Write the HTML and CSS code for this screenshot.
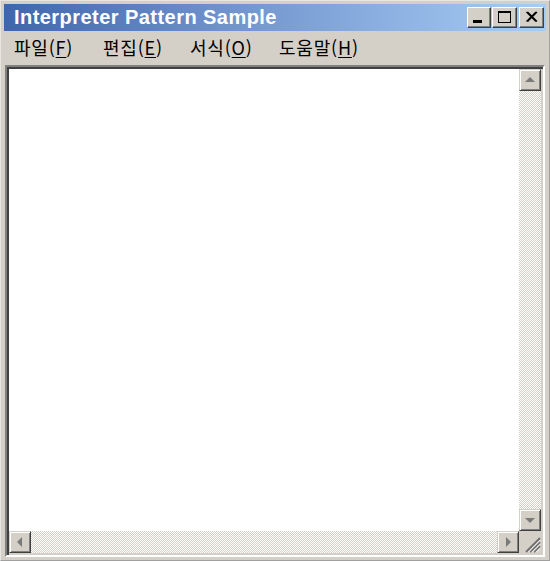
FILE: index.html
```html
<!DOCTYPE html>
<html lang="ko">
<head>
<meta charset="utf-8">
<title>Interpreter Pattern Sample</title>
<link rel="stylesheet" href="styles.css">
</head>
<body>
<div class="window">
  <div class="titlebar">
    <span class="title">Interpreter Pattern Sample</span>
    <div class="caption-buttons">
      <div class="cbtn"><svg width="24" height="21" viewBox="0 0 24 21"><rect x="6" y="13" width="9" height="3" fill="#000"/></svg></div>
      <div class="cbtn max"><svg width="24" height="21" viewBox="0 0 24 21"><rect x="5.5" y="4.5" width="12" height="11" fill="none" stroke="#000"/><rect x="5" y="4" width="13" height="2" fill="#000"/></svg></div>
      <div class="cbtn close"><svg width="24" height="21" viewBox="0 0 24 21"><path d="M6.5 5 L16 14.5 M7.5 5 L17 14.5 M16 5 L6.5 14.5 M17 5 L7.5 14.5" stroke="#000" stroke-width="1.4"/></svg></div>
    </div>
  </div>
  <div class="menubar">
    <span class="menu m1">파일(<u>F</u>)</span>
    <span class="menu m2">편집(<u>E</u>)</span>
    <span class="menu m3">서식(<u>O</u>)</span>
    <span class="menu m4">도움말(<u>H</u>)</span>
  </div>
  <div class="client">
    <div class="edit"></div>
    <div class="vscroll">
      <div class="sbtn"><svg width="20" height="20" viewBox="0 0 20 20"><path d="M5 12 L15 12 L10 7 Z" fill="#7a7a7a"/></svg></div>
      <div class="track"></div>
      <div class="sbtn"><svg width="20" height="20" viewBox="0 0 20 20"><path d="M5 8 L15 8 L10 13 Z" fill="#7a7a7a"/></svg></div>
    </div>
    <div class="hscroll">
      <div class="sbtn"><svg width="20" height="20" viewBox="0 0 20 20"><path d="M12 5 L12 15 L7 10 Z" fill="#7a7a7a"/></svg></div>
      <div class="track"></div>
      <div class="sbtn"><svg width="20" height="20" viewBox="0 0 20 20"><path d="M8 5 L8 15 L13 10 Z" fill="#7a7a7a"/></svg></div>
    </div>
    <div class="grip"><svg width="22" height="22" viewBox="0 0 22 22"><path d="M21 7 L7 21 M21 11 L11 21 M21 15 L15 21" stroke="#707070" stroke-width="1.8"/><path d="M21 9.5 L9.5 21 M21 13.5 L13.5 21 M21 17.5 L17.5 21" stroke="#fff" stroke-width="1"/></svg></div>
  </div>
</div>
</body>
</html>
```
FILE: styles.css
```css
html, body {
  margin: 0;
  padding: 0;
  background: #ffffff;
}
.window {
  width: 550px;
  height: 561px;
  box-sizing: border-box;
  background: #d4d0c8;
  border-top: 1px solid #e8e6e0;
  border-left: 1px solid #e8e6e0;
  border-right: 1px solid #a0a0a0;
  border-bottom: 1px solid #a0a0a0;
  padding: 3px;
  display: flex;
  flex-direction: column;
}
.titlebar {
  height: 27px;
  flex: none;
  background: linear-gradient(to right, #3f65ad 0%, #6f92cc 40%, #a8cdf4 100%);
  display: flex;
  align-items: center;
  padding: 0 2px 0 10px;
}
.title {
  font-family: "Liberation Sans", Arial, sans-serif;
  font-weight: bold;
  font-size: 20px;
  letter-spacing: 0.45px;
  color: #ffffff;
  flex: 1;
}
.caption-buttons {
  display: flex;
  align-items: center;
}
.cbtn {
  width: 24px;
  height: 21px;
  box-sizing: border-box;
  background: #d4d0c8;
  border-top: 1px solid #ffffff;
  border-left: 1px solid #ffffff;
  border-right: 1px solid #404040;
  border-bottom: 1px solid #404040;
  box-shadow: inset -1px -1px 0 #808080;
  display: flex;
  align-items: center;
  justify-content: center;
  overflow: hidden;
}
.cbtn svg { flex: none; }
.cbtn.max { margin-left: 1px; width: 25px; }
.cbtn.close { margin-left: 2px; width: 25px; }
.menubar {
  height: 32px;
  flex: none;
  display: flex;
  align-items: center;
  padding-left: 10px;
  font-family: "Noto Sans CJK KR", "Liberation Sans", sans-serif;
  font-size: 18px;
  letter-spacing: 0.8px;
  color: #000;
}
.menu { white-space: nowrap; }
.menu u { text-decoration-thickness: 1px; text-underline-offset: 2px; }
.m1 { width: 89px; }
.m2 { width: 87px; }
.m3 { width: 89px; }
.client {
  flex: 1;
  margin: 2px 1px 0 1px;
  box-sizing: border-box;
  border-top: 2px solid #808080;
  border-left: 2px solid #808080;
  border-right: 2px solid #ffffff;
  border-bottom: 2px solid #ffffff;
  box-shadow: inset 2px 2px 0 #404040, inset -2px -2px 0 #d4d0c8;
  padding: 2px;
  display: grid;
  grid-template-columns: 1fr 22px;
  grid-template-rows: 1fr 22px;
}
.edit {
  background: #ffffff;
}
.vscroll {
  display: flex;
  flex-direction: column;
}
.hscroll {
  display: flex;
  flex-direction: row;
}
.track {
  flex: 1;
  background: repeating-conic-gradient(#d4d0c8 0 25%, #ffffff 0 50%) 0 0 / 2px 2px;
}
.sbtn {
  width: 22px;
  height: 22px;
  flex: none;
  box-sizing: border-box;
  background: #d4d0c8;
  border-top: 1px solid #d4d0c8;
  border-left: 1px solid #d4d0c8;
  border-right: 1px solid #404040;
  border-bottom: 1px solid #404040;
  box-shadow: inset 1px 1px 0 #ffffff, inset -1px -1px 0 #808080;
  display: flex;
  align-items: center;
  justify-content: center;
}
.grip {
  background: #d4d0c8;
  display: flex;
  align-items: flex-end;
  justify-content: flex-end;
}
```
